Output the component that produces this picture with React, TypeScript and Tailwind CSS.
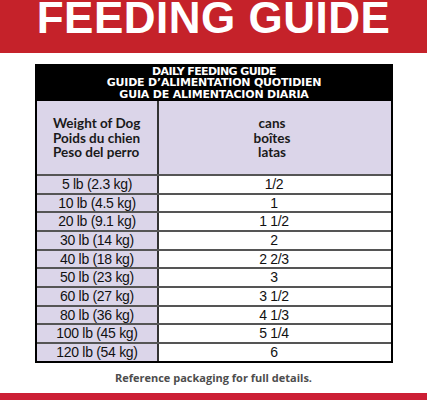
const ROWS = [
  ['5 lb (2.3 kg)', '1/2'],
  ['10 lb (4.5 kg)', '1'],
  ['20 lb (9.1 kg)', '1 1/2'],
  ['30 lb (14 kg)', '2'],
  ['40 lb (18 kg)', '2 2/3'],
  ['50 lb (23 kg)', '3'],
  ['60 lb (27 kg)', '3 1/2'],
  ['80 lb (36 kg)', '4 1/3'],
  ['100 lb (45 kg)', '5 1/4'],
  ['120 lb (54 kg)', '6'],
]

export default function App() {
  return (
    <div className="w-[427px] h-[400px] bg-white flex flex-col overflow-hidden font-['Liberation_Sans',sans-serif]">
      <div className="h-[53px] bg-[#c5222a] flex justify-center items-start overflow-hidden">
        <h1 className="text-white font-bold text-[44px] leading-none tracking-[0.5px] -mt-[4px]">
          FEEDING GUIDE
        </h1>
      </div>

      <div className="mt-[11px] ml-[35px] w-[358px] border-2 border-black">
        <div className="bg-black text-white text-center font-['DejaVu_Sans',sans-serif] font-bold text-[11px] leading-[11.3px] tracking-[-0.2px] pb-[1px]">
          <div className="tracking-[-0.6px]">DAILY FEEDING GUIDE</div>
          <div>GUIDE D’ALIMENTATION QUOTIDIEN</div>
          <div>GUIA DE ALIMENTACION DIARIA</div>
        </div>

        <div className="grid grid-cols-[122px_1fr] bg-[#dbd5e9] h-[73px] font-['Lato',sans-serif] font-bold text-[13.5px] leading-[14.5px] text-[#1a1a1a]">
          <div className="border-r-2 border-[#333] flex flex-col justify-center pl-[16px] pt-[1px]">
            <div>Weight of Dog</div>
            <div>Poids du chien</div>
            <div>Peso del perro</div>
          </div>
          <div className="flex flex-col justify-center items-center pt-[1px] pr-[6px]">
            <div>cans</div>
            <div>boîtes</div>
            <div>latas</div>
          </div>
        </div>

        {ROWS.map(([weight, cans]) => (
          <div
            key={weight}
            className="grid grid-cols-[122px_1fr] h-[18.7px] border-t-2 border-[#555] text-[14px] leading-[16px] tracking-[-0.3px] text-[#111]"
          >
            <div className="bg-[#dbd5e9] border-r-2 border-[#333] text-center">{weight}</div>
            <div className="bg-white text-center pr-[2px]">{cans}</div>
          </div>
        ))}
      </div>

      <p className="mt-[8px] text-center font-['Open_Sans',sans-serif] font-bold text-[11px] leading-[14px] text-[#4d4d4d]">
        Reference packaging for full details.
      </p>

      <div className="mt-auto h-[7px] bg-[#cc1f35]" />
    </div>
  )
}
